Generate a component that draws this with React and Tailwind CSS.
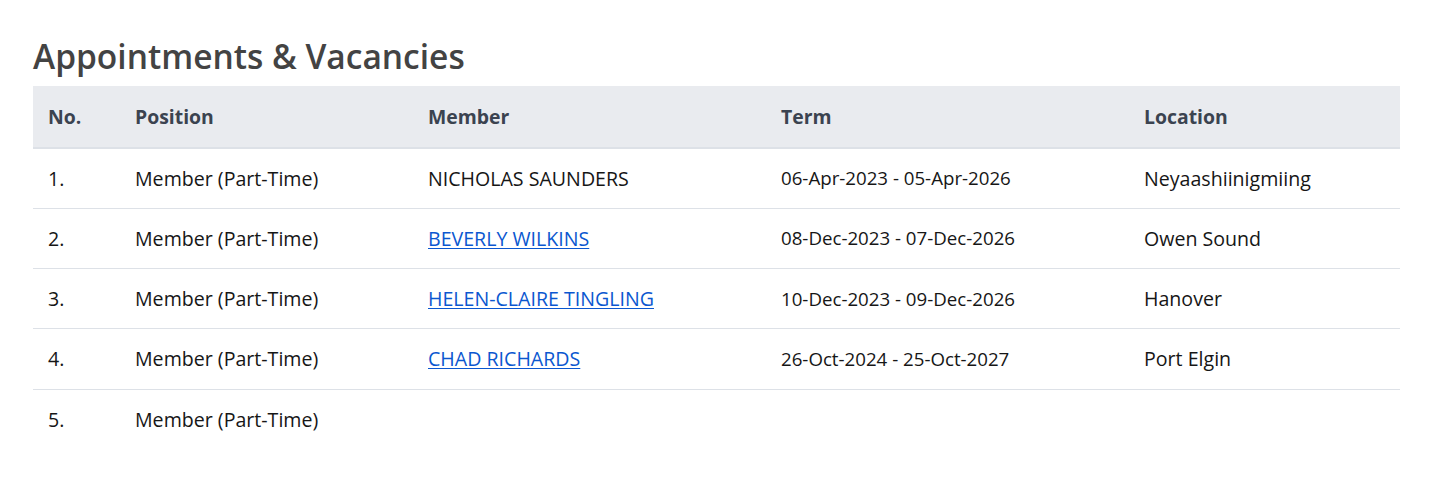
const rows = [
  { no: "1.", position: "Member (Part-Time)", member: "NICHOLAS SAUNDERS", link: false, term: "06-Apr-2023 - 05-Apr-2026", location: "Neyaashiinigmiing" },
  { no: "2.", position: "Member (Part-Time)", member: "BEVERLY WILKINS", link: true, term: "08-Dec-2023 - 07-Dec-2026", location: "Owen Sound" },
  { no: "3.", position: "Member (Part-Time)", member: "HELEN-CLAIRE TINGLING", link: true, term: "10-Dec-2023 - 09-Dec-2026", location: "Hanover" },
  { no: "4.", position: "Member (Part-Time)", member: "CHAD RICHARDS", link: true, term: "26-Oct-2024 - 25-Oct-2027", location: "Port Elgin" },
  { no: "5.", position: "Member (Part-Time)", member: "", link: false, term: "", location: "" },
]

export default function App() {
  return (
    <div className="min-h-[479px] bg-white px-[33px] pt-[36px] font-['Open_Sans',sans-serif]">
      <h2 className="text-[33.5px] font-semibold leading-[40px] text-[#434343]">
        Appointments &amp; Vacancies
      </h2>

      <table className="mt-[10px] w-[1367px] table-fixed border-collapse text-left text-[19.6px]">
        <colgroup>
          <col className="w-[87px]" />
          <col className="w-[293px]" />
          <col className="w-[353px]" />
          <col className="w-[363px]" />
          <col />
        </colgroup>
        <thead>
          <tr className="h-[62px] border-b-2 border-[#dde1e7] bg-[#e9ebef] text-[19.4px] text-[#3b4350]">
            <th className="px-[15px] font-bold">No.</th>
            <th className="px-[15px] font-bold">Position</th>
            <th className="px-[15px] font-bold">Member</th>
            <th className="px-[15px] font-bold">Term</th>
            <th className="px-[15px] font-bold">Location</th>
          </tr>
        </thead>
        <tbody className="text-[#161616]">
          {rows.map((r, i) => (
            <tr
              key={r.no}
              className={
                i < rows.length - 1
                  ? "h-[60.3px] border-b border-[#dde1e7]"
                  : "h-[60.3px]"
              }
            >
              <td className="px-[15px]">{r.no}</td>
              <td className="px-[15px]">{r.position}</td>
              <td className="px-[15px]">
                {r.link ? (
                  <a href="#" className="text-[#0b57d0] underline underline-offset-2">
                    {r.member}
                  </a>
                ) : (
                  r.member
                )}
              </td>
              <td className="px-[15px] text-[18.7px]">{r.term}</td>
              <td className="px-[15px]">{r.location}</td>
            </tr>
          ))}
        </tbody>
      </table>
    </div>
  )
}
